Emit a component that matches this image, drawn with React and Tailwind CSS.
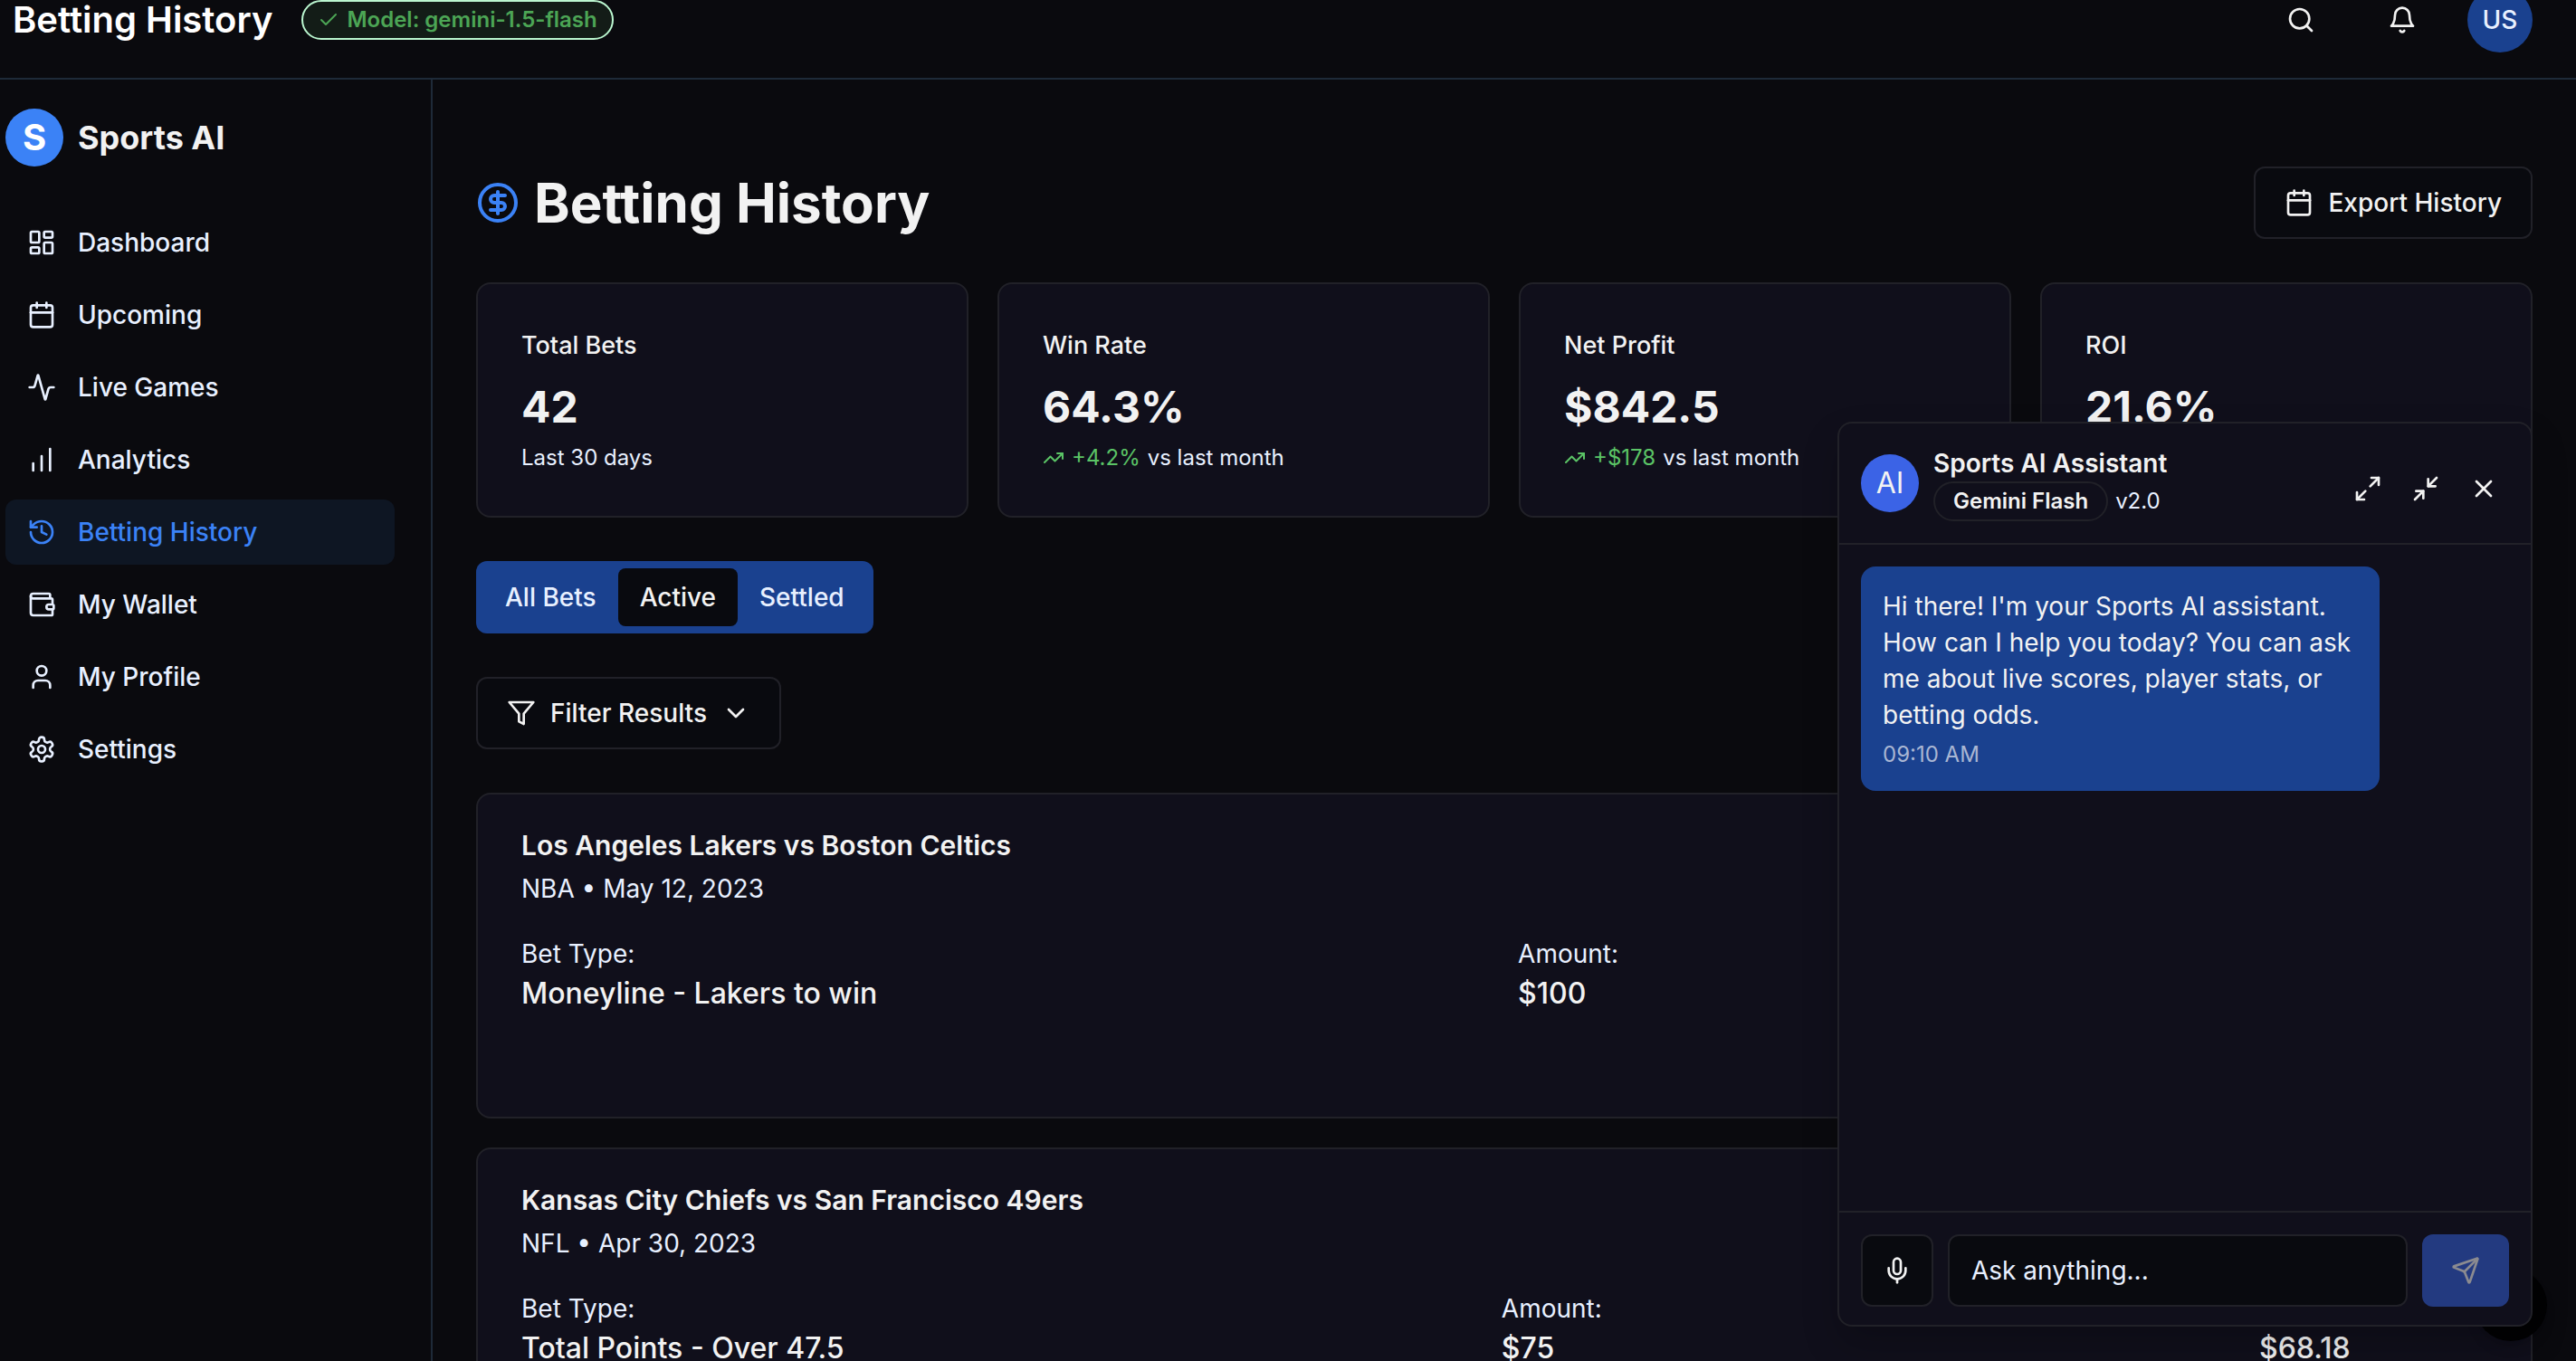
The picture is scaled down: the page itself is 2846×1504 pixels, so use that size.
import React from "react";
import {
  Activity,
  Calendar,
  ChartNoAxesColumnIncreasing,
  Check,
  ChevronDown,
  CircleDollarSign,
  History,
  LayoutDashboard,
  Maximize2,
  Mic,
  Minimize2,
  Search,
  Send,
  TrendingUp,
  User,
  Wallet,
  X,
} from "lucide-react";

function Icon({ children, className }) {
  return (
    <svg
      viewBox="0 0 24 24"
      fill="none"
      stroke="currentColor"
      strokeWidth="2"
      strokeLinecap="round"
      strokeLinejoin="round"
      aria-hidden="true"
      className={className}
    >
      {children}
    </svg>
  );
}

function FilterIcon({ className }) {
  return (
    <Icon className={className}>
      <polygon points="22 3 2 3 10 12.46 10 19 14 21 14 12.46 22 3" />
    </Icon>
  );
}

function BellIcon({ className }) {
  return (
    <Icon className={className}>
      <path d="M6 8a6 6 0 0 1 12 0c0 7 3 9 3 9H3s3-2 3-9" />
      <path d="M10.3 21a1.94 1.94 0 0 0 3.4 0" />
    </Icon>
  );
}

function SettingsIcon({ className }) {
  return (
    <Icon className={className}>
      <path d="M12.22 2h-.44a2 2 0 0 0-2 2v.18a2 2 0 0 1-1 1.73l-.43.25a2 2 0 0 1-2 0l-.15-.08a2 2 0 0 0-2.73.73l-.22.38a2 2 0 0 0 .73 2.73l.15.1a2 2 0 0 1 1 1.72v.51a2 2 0 0 1-1 1.74l-.15.09a2 2 0 0 0-.73 2.73l.22.38a2 2 0 0 0 2.73.73l.15-.08a2 2 0 0 1 2 0l.43.25a2 2 0 0 1 1 1.73V20a2 2 0 0 0 2 2h.44a2 2 0 0 0 2-2v-.18a2 2 0 0 1 1-1.73l.43-.25a2 2 0 0 1 2 0l.15.08a2 2 0 0 0 2.73-.73l.22-.39a2 2 0 0 0-.73-2.73l-.15-.08a2 2 0 0 1-1-1.74v-.5a2 2 0 0 1 1-1.74l.15-.09a2 2 0 0 0 .73-2.73l-.22-.38a2 2 0 0 0-2.73-.73l-.15.08a2 2 0 0 1-2 0l-.43-.25a2 2 0 0 1-1-1.73V4a2 2 0 0 0-2-2z" />
      <circle cx="12" cy="12" r="3" />
    </Icon>
  );
}

const navItems = [
  { label: "Dashboard", icon: LayoutDashboard },
  { label: "Upcoming", icon: Calendar },
  { label: "Live Games", icon: Activity },
  { label: "Analytics", icon: ChartNoAxesColumnIncreasing },
  { label: "Betting History", icon: History, active: true },
  { label: "My Wallet", icon: Wallet },
  { label: "My Profile", icon: User },
  { label: "Settings", icon: SettingsIcon },
];

const stats = [
  { label: "Total Bets", value: "42", note: "Last 30 days" },
  { label: "Win Rate", value: "64.3%", change: "+4.2%", note: "vs last month" },
  { label: "Net Profit", value: "$842.5", change: "+$178", note: "vs last month" },
  { label: "ROI", value: "21.6%" },
];

const bets = [
  {
    match: "Los Angeles Lakers vs Boston Celtics",
    meta: "NBA • May 12, 2023",
    type: "Moneyline - Lakers to win",
    amount: "$100",
    payout: "$90.91",
  },
  {
    match: "Kansas City Chiefs vs San Francisco 49ers",
    meta: "NFL • Apr 30, 2023",
    type: "Total Points - Over 47.5",
    amount: "$75",
    payout: "$68.18",
  },
];

function Header() {
  return (
    <header className="-mt-[42px] flex h-[130px] shrink-0 items-center justify-between border-b-2 border-[#1e2a38] pl-[14px] pr-12">
      <div className="flex items-center gap-8">
        <span className="text-[40px] leading-[56px] font-semibold text-white">Betting History</span>
        <span className="flex h-11 items-center gap-2 rounded-full border-2 border-[#bbf7d0] bg-[#131c17] px-4 text-[24px] leading-8 font-semibold text-[#4ca555]">
          <Check className="size-6" />
          Model: gemini-1.5-flash
        </span>
      </div>
      <div className="flex items-center gap-8">
        <button aria-label="Search" className="flex size-20 items-center justify-center">
          <Search className="size-8" />
        </button>
        <button aria-label="Notifications" className="flex size-20 items-center justify-center">
          <BellIcon className="size-8" />
        </button>
        <button aria-label="Account" className="flex size-[72px] items-center justify-center rounded-full bg-[#1a418f] text-[28px] font-medium text-[#e8f0ff]">
          US
        </button>
      </div>
    </header>
  );
}

function Sidebar() {
  return (
    <aside className="w-[478px] shrink-0 border-r-2 border-[#1e2a38] pt-8 pr-10 pl-[6px]">
      <div className="flex items-center gap-4">
        <div className="flex size-16 items-center justify-center rounded-full bg-[#3b82f6] text-[40px] leading-none font-bold text-white">S</div>
        <span className="text-[36px] leading-[56px] font-bold">Sports AI</span>
      </div>
      <nav className="mt-12 flex flex-col gap-2">
        {navItems.map(({ label, icon: NavIcon, active }) => (
          <a
            key={label}
            href="#"
            className={
              active
                ? "flex h-[72px] items-center gap-6 rounded-xl bg-[#0e1623] px-6 text-[28px] font-medium text-[#3b82f6]"
                : "flex h-[72px] items-center gap-6 rounded-xl px-6 text-[28px] font-medium text-[#e8f0ff]"
            }
          >
            <NavIcon className="size-8" />
            {label}
          </a>
        ))}
      </nav>
    </aside>
  );
}

function StatCard({ label, value, change, note }) {
  return (
    <div className="rounded-2xl border-2 border-[#212128] bg-[#100f1b] p-12">
      <h3 className="text-[27px] leading-10 font-medium">{label}</h3>
      <div className="mt-4 text-[48px] leading-[64px] font-bold">{value}</div>
      {note && (
        <p className="mt-2 flex items-center gap-2 text-[24px] leading-8 text-[#e8f0ff]">
          {change && (
            <span className="flex items-center gap-2 text-[#5bc466]">
              <TrendingUp className="size-6" />
              {change}
            </span>
          )}
          {note}
        </p>
      )}
    </div>
  );
}

function Field({ label, value, className }) {
  return (
    <div className={className}>
      <dt className="text-[28px] leading-10 text-[#e8f0ff]">{label}</dt>
      <dd className="text-[32px] leading-[48px] font-medium">{value}</dd>
    </div>
  );
}

function BetCard({ match, meta, type, amount, payout }) {
  return (
    <article className="rounded-2xl border-2 border-[#212128] bg-[#100f1b] px-12 pt-8 pb-28">
      <h3 className="text-[30px] leading-[48px] font-semibold">{match}</h3>
      <p className="mt-1 text-[28px] leading-10 text-[#e8f0ff]">{meta}</p>
      <dl className="mt-8 flex justify-between">
        <Field label="Bet Type:" value={type} />
        <Field label="Amount:" value={amount} />
        <Field label="Potential Payout:" value={payout} className="w-[252px]" />
      </dl>
    </article>
  );
}

function Chat() {
  return (
    <section
      aria-label="Sports AI Assistant"
      className="absolute right-12 bottom-[38px] flex h-[1000px] w-[768px] flex-col rounded-2xl border-2 border-[#212128] bg-[#100f1b] shadow-[0_20px_40px_rgba(0,0,0,0.2)]"
    >
      <div className="flex items-center gap-4 border-b-2 border-[#212128] p-6">
        <div className="flex size-16 items-center justify-center rounded-full bg-[#3b63e6] text-[32px]">AI</div>
        <div className="grow">
          <h2 className="text-[28px] leading-10 font-semibold">Sports AI Assistant</h2>
          <div className="flex items-center gap-2 text-[24px] leading-8">
            <span className="flex h-11 items-center rounded-full border-2 border-[#212128] px-5 font-semibold">Gemini Flash</span>
            <span className="text-[#e8f0ff]">v2.0</span>
          </div>
        </div>
        <div className="flex gap-2 self-end pb-2">
          <button aria-label="Expand" className="flex size-14 items-center justify-center">
            <Maximize2 className="size-8" />
          </button>
          <button aria-label="Minimize" className="flex size-14 items-center justify-center">
            <Minimize2 className="size-8" />
          </button>
          <button aria-label="Close" className="flex size-14 items-center justify-center">
            <X className="size-8" />
          </button>
        </div>
      </div>
      <div className="grow p-6">
        <div className="max-w-[80%] rounded-2xl bg-[#1a418f] p-6">
          <p className="text-[28px] leading-10">
            Hi there! I'm your Sports AI assistant. How can I help you today? You can ask me about live scores, player stats, or betting odds.
          </p>
          <p className="mt-2 text-[24px] leading-8 text-[#a9b6d3]">09:10 AM</p>
        </div>
      </div>
      <form className="flex gap-4 border-t-2 border-[#212128] px-6 pt-6 pb-5">
        <button type="button" aria-label="Voice input" className="flex size-20 items-center justify-center rounded-xl border-2 border-[#212128] bg-[#090a0f]">
          <Mic className="size-8" />
        </button>
        <input
          aria-label="Message"
          placeholder="Ask anything..."
          className="h-20 min-w-0 grow rounded-xl border-2 border-[#212128] bg-[#090a0f] px-6 text-[28px] outline-none placeholder:text-[#e8f0ff]"
        />
        <button type="button" aria-label="Send" className="flex h-20 w-24 items-center justify-center rounded-xl bg-[#233a80] text-[#8b8b90]">
          <Send className="size-8" />
        </button>
      </form>
    </section>
  );
}

export default function App() {
  return (
    <div className="relative flex h-screen flex-col overflow-hidden bg-[#0a0a0e] font-[Inter,sans-serif] text-[#f2f2f2]">
      <Header />
      <div className="flex min-h-0 grow">
        <Sidebar />
        <main className="min-w-0 grow overflow-hidden px-12 pt-24">
          <div className="flex items-center justify-between">
            <h1 className="flex items-center gap-4 text-[60px] leading-[72px] font-bold">
              <CircleDollarSign className="size-12 text-[#3b82f6]" />
              Betting History
            </h1>
            <button className="flex h-20 items-center gap-4 rounded-xl border-2 border-[#212128] bg-[#090a0f] px-8 text-[28px] font-medium">
              <Calendar className="size-8" />
              Export History
            </button>
          </div>
          <div className="mt-12 grid grid-cols-4 gap-8">
            {stats.map((stat) => (
              <StatCard key={stat.label} {...stat} />
            ))}
          </div>
          <div role="tablist" className="mt-12 flex h-20 w-fit rounded-xl bg-[#1a418f] p-2 text-[28px] font-medium text-[#e8f0ff]">
            <button role="tab" className="rounded-lg px-6">All Bets</button>
            <button role="tab" aria-selected="true" className="rounded-lg bg-[#090a0f] px-6 text-[#f2f2f2]">Active</button>
            <button role="tab" className="rounded-lg px-6">Settled</button>
          </div>
          <button className="mt-12 flex h-20 items-center gap-4 rounded-xl border-2 border-[#212128] bg-[#090a0f] px-8 text-[28px] font-medium">
            <FilterIcon className="size-8" />
            Filter Results
            <ChevronDown className="size-8" />
          </button>
          <div className="mt-12 flex flex-col gap-8">
            {bets.map((bet) => (
              <BetCard key={bet.match} {...bet} />
            ))}
          </div>
        </main>
      </div>
      <div className="absolute right-8 bottom-[22px] size-20 rounded-full bg-[#020203] shadow-lg" />
      <Chat />
    </div>
  );
}
